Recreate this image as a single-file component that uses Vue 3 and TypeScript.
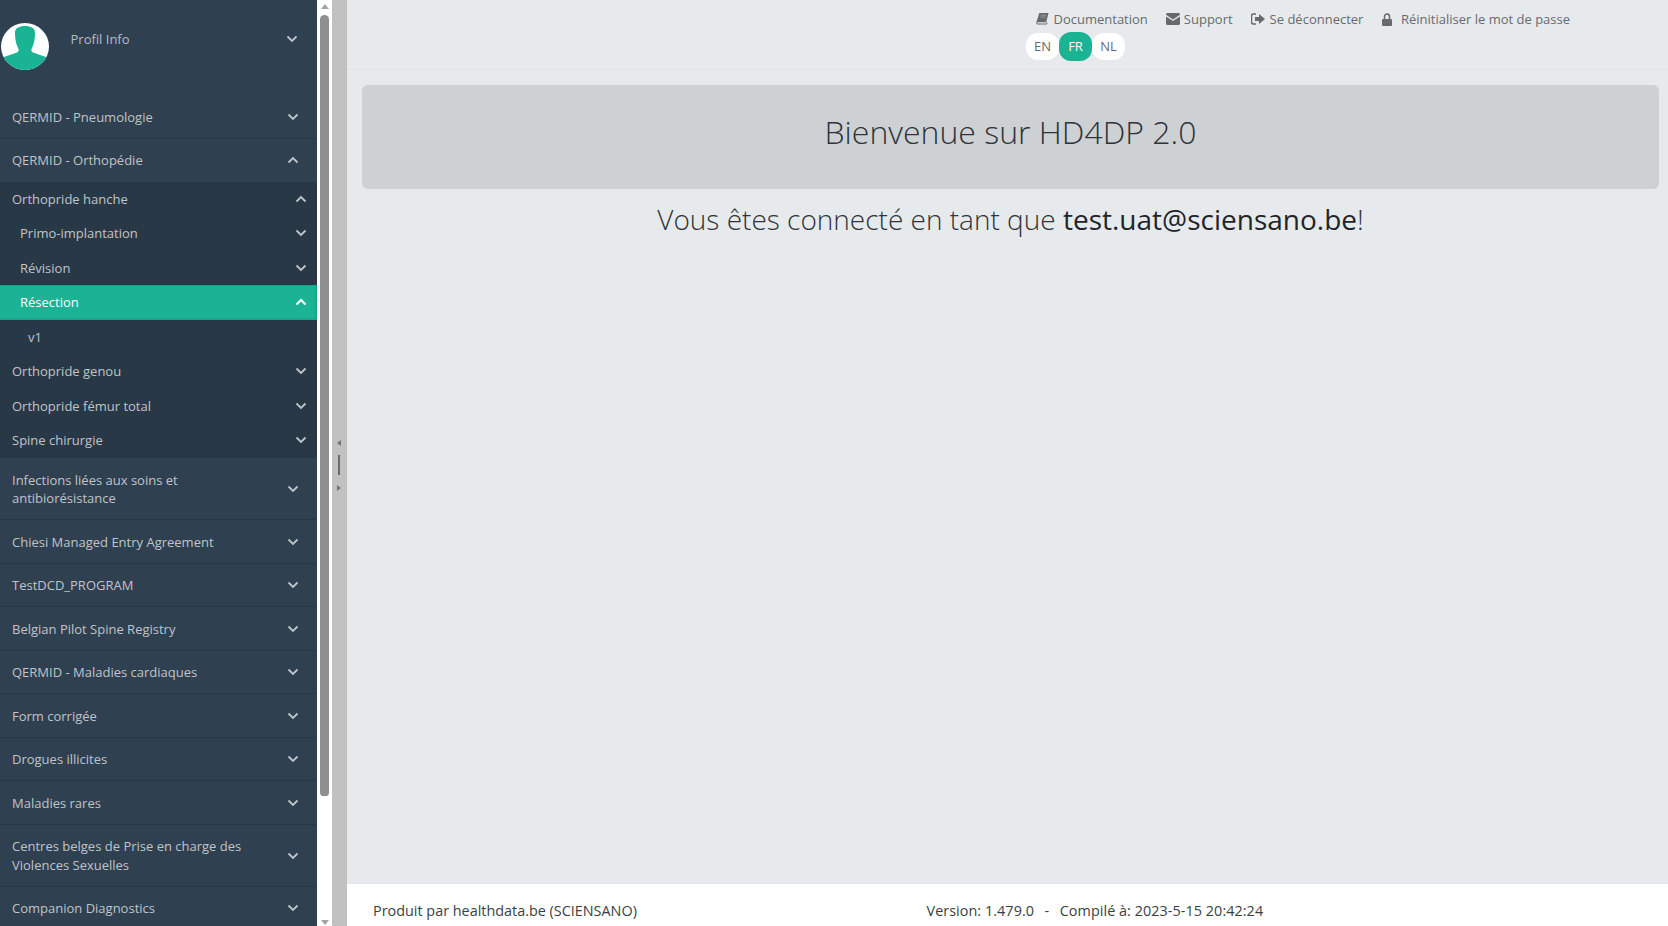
<script setup lang="ts">
interface Row { label: string; cls: string; open?: boolean }
const before: Row[] = [
  { label: 'QERMID - Pneumologie', cls: 'top' },
  { label: 'QERMID - Orthopédie', cls: 'top', open: true },
]
const subs: Row[] = [
  { label: 'Orthopride hanche', cls: 'l1', open: true },
  { label: 'Primo-implantation', cls: 'l2' },
  { label: 'Révision', cls: 'l2' },
  { label: 'Résection', cls: 'l2 active', open: true },
  { label: 'v1', cls: 'l3 noarrow' },
  { label: 'Orthopride genou', cls: 'l1' },
  { label: 'Orthopride fémur total', cls: 'l1' },
  { label: 'Spine chirurgie', cls: 'l1' },
]
const after: Row[] = [
  { label: 'Infections liées aux soins et antibiorésistance', cls: 'top two first-two' },
  { label: 'Chiesi Managed Entry Agreement', cls: 'top' },
  { label: 'TestDCD_PROGRAM', cls: 'top' },
  { label: 'Belgian Pilot Spine Registry', cls: 'top' },
  { label: 'QERMID - Maladies cardiaques', cls: 'top' },
  { label: 'Form corrigée', cls: 'top' },
  { label: 'Drogues illicites', cls: 'top' },
  { label: 'Maladies rares', cls: 'top' },
  { label: 'Centres belges de Prise en charge des Violences Sexuelles', cls: 'top two' },
  { label: 'Companion Diagnostics', cls: 'top' },
]
</script>

<template>
  <div class="page">
    <aside class="sidebar">
      <div class="profile">
        <svg class="avatar" viewBox="0 0 48 47" width="48" height="47">
          <clipPath id="av"><ellipse cx="24" cy="23.500" rx="24" ry="23.500" /></clipPath>
          <ellipse cx="24" cy="23.500" rx="24" ry="23.500" fill="#fff" />
          <path clip-path="url(#av)" fill="#1ab394" d="M14 10C14 5 18 3 24 3s10 2 10 7c0 6-1 11-3 15-1 2-1 3 1 4.500L45 34v13H3V34l13-4.500c2-1.500 2-2.500 1-4.500-2-4-3-9-3-15z" />
        </svg>
        <span class="profile-name">Profil Info</span>
        <svg class="chev" viewBox="0 0 12 8" width="12" height="8"><path d="M1.500 1.500 6 6l4.500-4.500" /></svg>
      </div>
      <ul class="menu">
        <li v-for="r in before" :key="r.label" class="row" :class="r.cls">
          <span class="lab">{{ r.label }}</span>
          <svg class="chev" viewBox="0 0 12 8" width="12" height="8"><path :d="r.open ? 'M1.500 6.500 6 2l4.500 4.500' : 'M1.500 1.500 6 6l4.500-4.500'" /></svg>
        </li>
        <li class="subwrap">
          <ul class="menu">
            <li v-for="r in subs" :key="r.label" class="row" :class="r.cls">
              <span class="lab">{{ r.label }}</span>
              <svg v-if="!r.cls.includes('noarrow')" class="chev" viewBox="0 0 12 8" width="12" height="8"><path :d="r.open ? 'M1.500 6.500 6 2l4.500 4.500' : 'M1.500 1.500 6 6l4.500-4.500'" /></svg>
            </li>
          </ul>
        </li>
        <li v-for="r in after" :key="r.label" class="row" :class="r.cls">
          <span class="lab">{{ r.label }}</span>
          <svg class="chev" viewBox="0 0 12 8" width="12" height="8"><path d="M1.500 1.500 6 6l4.500-4.500" /></svg>
        </li>
      </ul>
    </aside>

    <div class="scrollbar">
      <span class="sb-up"></span>
      <span class="sb-thumb"></span>
      <span class="sb-down"></span>
    </div>

    <div class="splitter">
      <span class="sp-left"></span>
      <span class="sp-bar"></span>
      <span class="sp-right"></span>
    </div>

    <main class="main">
      <header class="topbar">
        <nav class="links">
          <a class="link">
            <svg viewBox="0 0 14 14" width="13" height="13"><path d="M3.500 1H13.500l-2.500 10H2.200c-.6 0-1 .4-.9.800s.5.700 1 .700H11l.5-1.500 1 .3-.8 2.200H2.500C1 13.500.2 12.500.4 11.300z" fill="#676a6c" /><path d="M5 3.500h6M4.500 5.500h6" stroke="#a9acae" stroke-width=".7" /></svg>
            Documentation
          </a>
          <a class="link gap4">
            <svg viewBox="0 0 14 12" width="14" height="12"><path d="M0 1.500C0 .7.700 0 1.500 0h11c.8 0 1.500.7 1.500 1.500v.3L7 6.500 0 1.800zM0 3.500 7 8l7-4.500v7c0 .8-.7 1.500-1.500 1.500h-11C.7 12 0 11.300 0 10.500z" fill="#676a6c" /></svg>
            Support
          </a>
          <a class="link low">
            <svg viewBox="0 0 14 12" width="14" height="12"><path d="M5 1H2.500C1.300 1 .5 1.800.5 3v6c0 1.200.8 2 2 2H5" fill="none" stroke="#676a6c" stroke-width="1.500" /><path d="M8 1l6 5-6 5V8H4V4h4z" fill="#676a6c" /></svg>
            Se déconnecter
          </a>
          <a class="link low wide">
            <svg viewBox="0 0 10 13" width="10" height="13"><path d="M2.500 6V3.500a2.500 2.500 0 0 1 5 0V6" fill="none" stroke="#676a6c" stroke-width="1.500" /><rect x="0" y="6" width="10" height="7" rx="1" fill="#676a6c" /></svg>
            Réinitialiser le mot de passe
          </a>
        </nav>
        <div class="langs">
          <span class="lang">EN</span>
          <span class="lang on">FR</span>
          <span class="lang">NL</span>
        </div>
      </header>

      <section class="content">
        <div class="jumbo"><h1>Bienvenue sur HD4DP 2.0</h1></div>
        <h2 class="who">Vous êtes connecté en tant que <b>test.uat@sciensano.be</b>!</h2>
      </section>

      <footer class="footer">
        <span class="prod">Produit par healthdata.be (SCIENSANO)</span>
        <span class="ver">Version: 1.479.0<span class="sep">-</span>Compilé à: 2023-5-15 20:42:24</span>
      </footer>
    </main>
  </div>
</template>

<style>
html, body { margin: 0; height: 100%; overflow: hidden; }
</style>

<style scoped>
.page {
  display: flex;
  width: 1668px;
  height: 926px;
  overflow: hidden;
  font-family: "Open Sans", "Noto Sans", sans-serif;
  font-size: 13px;
  color: #676a6c;
}
.sidebar {
  width: 317px;
  flex: none;
  height: 926px;
  overflow: hidden;
  background: #2f4050;
}
.profile {
  display: flex;
  align-items: flex-start;
  height: 96px;
  padding: 0 19px 0 1px;
  box-sizing: border-box;
  color: #a7b1c2;
}
.avatar { flex: none; margin-top: 23px; }
.profile-name { flex: 1; margin: 30px 0 0 21.500px; color: #b6bcc5; }
.profile .chev { margin-top: 35px; }
.menu { list-style: none; margin: 0; padding: 0; }
.row {
  display: flex;
  align-items: center;
  box-sizing: border-box;
  color: #c0c4c9;
}
.lab { flex: 1; }
.chev { flex: none; fill: none; stroke: #bfc4ca; stroke-width: 1.800; }
.top {
  min-height: 43.500px;
  padding: 0.500px 18.500px 0 12px;
  border-bottom: 1px solid #293846;
}
.top.two { min-height: 62px; }
.top.first-two { min-height: 62.500px; }
.top.two .lab { padding-right: 34px; line-height: 18.500px; }
.top.first-two .lab { line-height: 18px; }
.top:first-child { min-height: 43px; padding-top: 0; }
.top:nth-child(2) { border-bottom: 0; min-height: 43px; padding: 0 18.500px 2px 12px; }
.subwrap { background: #293846; padding-bottom: 0.600px; }
.l1, .l2, .l3 { height: 34.400px; padding-right: 10.500px; }
.l1:first-child { height: 34px; }
.l1 { padding-left: 12px; }
.l2 { padding-left: 20px; }
.l3 { padding-left: 28px; }
.active {
  height: 35px;
  background: #1ab394;
  color: #fff;
  border: 2px solid #18a689;
  border-width: 1px 2px 2px 0;
  padding-right: 8.500px;
}
.active .chev { stroke: #fff; stroke-width: 2.200; }
.scrollbar {
  position: relative;
  width: 15px;
  flex: none;
  background: #fff;
  display: flex;
  flex-direction: column;
  align-items: center;
}
.sb-up, .sb-down { width: 0; height: 0; border: 4px solid transparent; }
.sb-up { border-bottom: 5px solid #a3a3a3; border-top: 0; margin-top: 4px; }
.sb-thumb {
  width: 9px;
  height: 781px;
  margin-top: 6px;
  background: #8f8f8f;
  border-radius: 5px 5px 4px 4px;
}
.sb-down { border-top: 5px solid #a3a3a3; border-bottom: 0; margin-top: auto; margin-bottom: 1px; }
.splitter {
  width: 15px;
  flex: none;
  background: #c1c1c1;
  display: flex;
  flex-direction: column;
  align-items: center;
  padding-top: 440px;
  box-sizing: border-box;
}
.sp-left, .sp-right { width: 0; height: 0; border: 3px solid transparent; }
.sp-left { border-right: 4px solid #757575; border-left: 0; margin-left: -1px; }
.sp-bar { width: 2px; height: 20px; background: #6b6b6b; margin: 9px 0 10px -1px; }
.sp-right { border-left: 4px solid #757575; border-right: 0; margin-left: -1px; }
.main {
  flex: 1;
  min-width: 0;
  display: flex;
  flex-direction: column;
  background: #e7eaec;
}
.topbar {
  height: 70px;
  box-sizing: border-box;
  border-bottom: 1px solid #dfe3e6;
  padding: 9px 0 0 688.500px;
  flex: none;
}
.links { display: flex; height: 19px; align-items: center; gap: 18px; white-space: nowrap; }
.link { display: inline-flex; align-items: center; gap: 5px; color: #676a6c; }
.link.gap4 { gap: 4px; }
.link.low { padding-top: 1px; gap: 5px; }
.link.low.wide { gap: 9px; margin-left: 0.500px; }
.langs { display: flex; margin-top: 4px; margin-left: -9.500px; }
.lang {
  width: 33px;
  height: 27px;
  margin-top: 1px;
  padding-bottom: 1px;
  box-sizing: border-box;
  display: flex;
  align-items: center;
  justify-content: center;
  background: #fff;
  border-radius: 12px;
  font-size: 13px;
}
.lang.on { height: 29px; margin-top: 0; background: #1ab394; color: #fff; }
.content { flex: 1; padding: 15px 9px 0 15px; }
.jumbo {
  height: 104px;
  background: #cdd1d4;
  border-radius: 6px;
  text-align: center;
  box-sizing: border-box;
  padding-top: 25px;
}
h1 {
  margin: 0;
  font-size: 32px;
  font-weight: 300;
  line-height: 44px;
  color: #2f3438;
}
.who {
  margin: 11px 0 0;
  text-align: center;
  font-size: 28px;
  line-height: 38px;
  font-weight: 300;
  color: #2f3438;
}
.who b { font-weight: 400; color: #212529; }
.footer {
  height: 43px;
  flex: none;
  box-sizing: border-box;
  background: #fff;
  border-top: 1px solid #dfe3e6;
  padding: 17px 0 0 26px;
  display: flex;
  font-size: 14.400px;
  line-height: 19px;
  color: #3a3f44;
  white-space: nowrap;
}
.prod { width: 553.500px; flex: none; }
.ver { letter-spacing: 0.050px; }
.sep { margin: 0 10.500px; }
</style>
